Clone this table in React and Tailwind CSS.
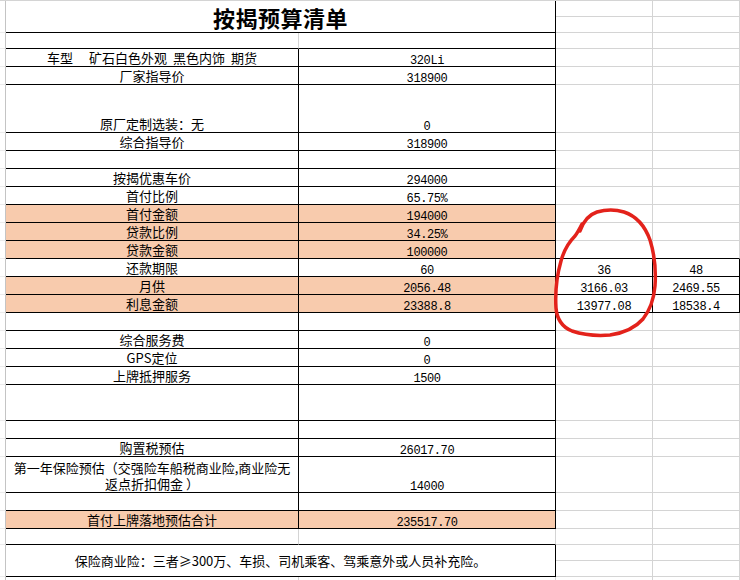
import React from "react";

const cjk = "font-['Noto_Sans_CJK_SC',sans-serif] text-[13px] leading-[16px] text-black";
const mono = "font-['Liberation_Mono',monospace] text-[12px] leading-[10px] tracking-[-0.4px] text-black";
const peachBg = "bg-[#f8cbad]";

function CarLabel() {
    return (
        <span className="flex">
            <span>车型</span>
            <span className="ml-[16px]">矿石白色外观</span>
            <span className="ml-[6px]">黑色内饰</span>
            <span className="ml-[6px]">期货</span>
        </span>
    );
}

const rows = [
    { h: "h-[16px]", soft: true },
    { h: "h-[18px]", a: <CarLabel />, b: "320Li" },
    { h: "h-[18px]", a: "厂家指导价", b: "318900" },
    { h: "h-[48px]", a: "原厂定制选装：无", b: "0" },
    { h: "h-[18px]", a: "综合指导价", b: "318900" },
    { h: "h-[18px]" },
    { h: "h-[18px]", a: "按揭优惠车价", b: "294000" },
    { h: "h-[18px]", a: "首付比例", b: "65.75%" },
    { h: "h-[18px]", a: "首付金额", b: "194000", peach: true },
    { h: "h-[18px]", a: "贷款比例", b: "34.25%", peach: true },
    { h: "h-[18px]", a: "贷款金额", b: "100000", peach: true, cd: "top" },
    { h: "h-[18px]", a: "还款期限", b: "60", c: "36", d: "48", cd: "box" },
    { h: "h-[18px]", a: "月供", b: "2056.48", c: "3166.03", d: "2469.55", peach: true, cd: "box" },
    { h: "h-[18px]", a: "利息金额", b: "23388.8", c: "13977.08", d: "18538.4", peach: true, cd: "box" },
    { h: "h-[18px]" },
    { h: "h-[18px]", a: "综合服务费", b: "0" },
    { h: "h-[18px]", a: "GPS定位", b: "0" },
    { h: "h-[18px]", a: "上牌抵押服务", b: "1500" },
    { h: "h-[36px]" },
    { h: "h-[18px]" },
    { h: "h-[18px]", a: "购置税预估", b: "26017.70" },
    {
        h: "h-[36px]",
        a: (
            <span className="text-center leading-[16px]">
                第一年保险预估（交强险车船税商业险,商业险无
                <br />
                返点折扣佣金 ）
            </span>
        ),
        b: "14000",
    },
    { h: "h-[18px]" },
    { h: "h-[18px]", a: "首付上牌落地预估合计", b: "235517.70", peach: true },
    { h: "h-[16px]", soft: true, softB: true },
];

function Stub() {
    return <div className="w-[6px] shrink-0 border-r border-b border-r-[#c4c4c4] border-b-[#ebebeb]" />;
}

function GreyCell({ w, children }) {
    return (
        <div className={`${w} shrink-0 border-r border-b border-[#d4d4d4] flex items-end justify-center`}>
            {children}
        </div>
    );
}

function Row({ h, a, b, c, d, peach, cd, soft, softB }) {
    const bg = peach ? peachBg : "bg-white";
    const cdClass =
        cd === "box"
            ? "border-black"
            : cd === "top"
            ? "border-r-[#d4d4d4] border-b-black"
            : "border-[#d4d4d4]";
    return (
        <div className={`flex ${h}`}>
            <Stub />
            <div
                className={`w-[293px] shrink-0 border-r border-b border-b-black ${
                    soft ? "border-r-[#d4d4d4]" : "border-r-black"
                } ${bg} flex items-end justify-center ${cjk}`}
            >
                {a}
            </div>
            <div
                className={`w-[257px] shrink-0 border-r border-b border-b-black ${
                    softB ? "border-r-[#d4d4d4]" : "border-r-black"
                } ${bg} flex items-end justify-center`}
            >
                {b && <span className={mono}>{b}</span>}
            </div>
            <div className={`w-[97px] shrink-0 border-r border-b ${cdClass} flex items-end justify-center`}>
                {c && <span className={mono}>{c}</span>}
            </div>
            <div className={`w-[87px] shrink-0 border-r border-b ${cdClass} flex items-end justify-center`}>
                {d && <span className={mono}>{d}</span>}
            </div>
        </div>
    );
}

function SplitCells() {
    return (
        <>
            <div className="w-[97px] shrink-0 flex flex-col">
                <div className="h-[16px] border-r border-b border-[#d4d4d4]" />
                <div className="h-[16px] border-r border-b border-[#d4d4d4]" />
            </div>
            <div className="w-[87px] shrink-0 flex flex-col">
                <div className="h-[16px] border-r border-b border-[#d4d4d4]" />
                <div className="h-[16px] border-r border-b border-[#d4d4d4]" />
            </div>
        </>
    );
}

export default function App() {
    return (
        <div className="relative w-[740px] h-[580px] bg-white overflow-hidden">
            <div className="h-px bg-[#d4d4d4]" />

            {/* Title */}
            <div className="flex h-[32px]">
                <Stub />
                <div className="w-[550px] shrink-0 border-r border-b border-black flex items-center justify-center">
                    <span className="font-['Noto_Sans_CJK_SC',sans-serif] font-bold text-[22px] leading-none tracking-[0.5px] text-black">
                        按揭预算清单
                    </span>
                </div>
                <SplitCells />
            </div>

            {rows.map((r, i) => (
                <Row key={i} {...r} />
            ))}

            {/* Note */}
            <div className="flex h-[32px]">
                <Stub />
                <div className="w-[550px] shrink-0 border-r border-b border-black flex items-center justify-center">
                    <span className={cjk}>保险商业险：三者≥300万、车损、司机乘客、驾乘意外或人员补充险。</span>
                </div>
                <SplitCells />
            </div>

            <div className="flex h-[16px]">
                <Stub />
                <GreyCell w="w-[293px]" />
                <GreyCell w="w-[257px]" />
                <GreyCell w="w-[97px]" />
                <GreyCell w="w-[87px]" />
            </div>

            {/* hand-drawn red mark */}
            <svg className="absolute inset-0 pointer-events-none" width="740" height="580">
                <path
                    d="M580 231 C583 222 588 215 597 212 C604 210 614 209 624 212 C636 216 645 226 650 240 C655 256 656 272 655 286 C654 298 650 310 643 319 C636 327 624 333 610 335 C598 336 584 335 572 331 C562 327 557 320 556 308 C555 292 557 275 561 261 C564 250 569 242 575 236 C578 232 580 228 582 224"
                    fill="none"
                    stroke="#e3221b"
                    strokeWidth="3.5"
                    strokeLinecap="round"
                    strokeLinejoin="round"
                />
            </svg>
        </div>
    );
}
